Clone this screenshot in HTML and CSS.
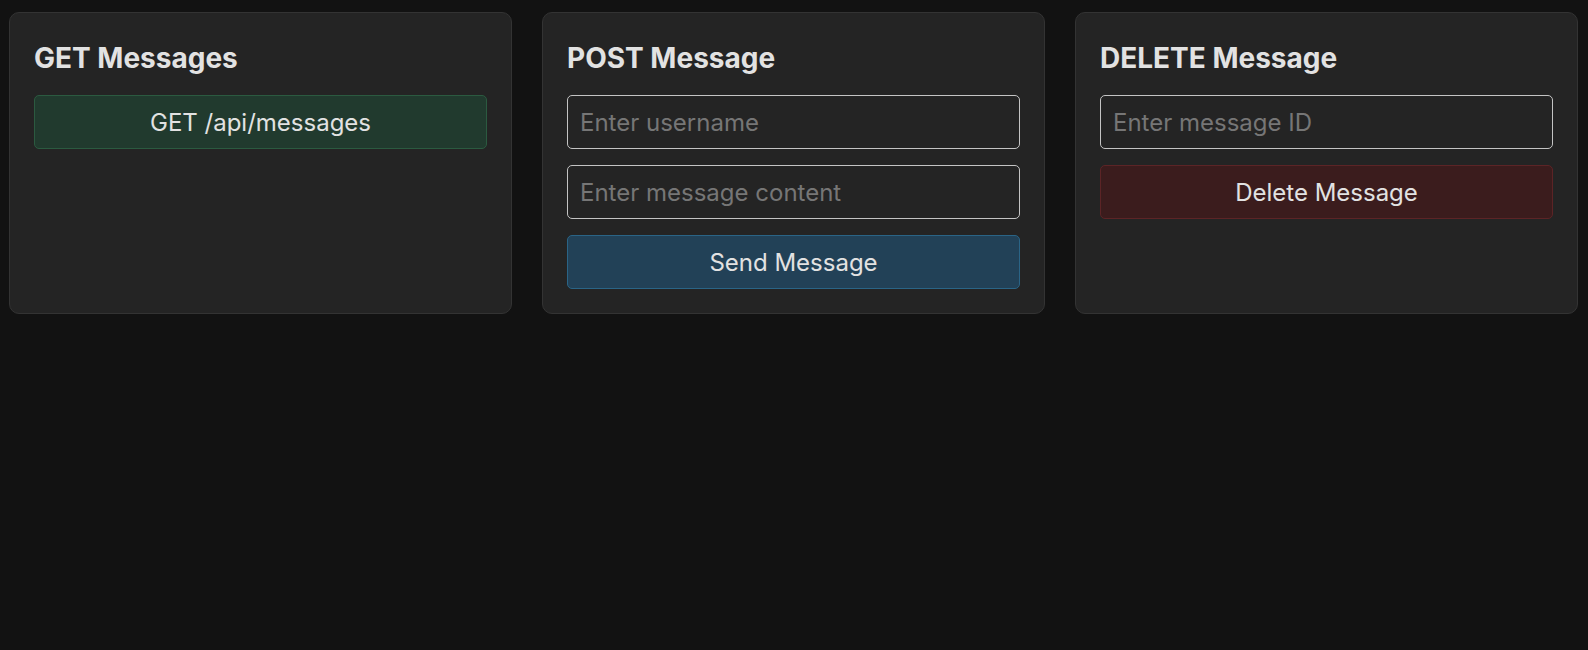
FILE: index.html
```html
<!DOCTYPE html>
<html lang="en">
<head>
<meta charset="utf-8">
<title>API Tester</title>
<link rel="stylesheet" href="styles.css">
</head>
<body>
<main class="grid">
  <section class="card">
    <h2 class="card-title">GET Messages</h2>
    <div class="stack">
      <button class="btn btn-get" type="button">GET /api/messages</button>
    </div>
  </section>
  <section class="card">
    <h2 class="card-title">POST Message</h2>
    <div class="stack">
      <input class="field" type="text" placeholder="Enter username">
      <input class="field" type="text" placeholder="Enter message content">
      <button class="btn btn-post" type="button">Send Message</button>
    </div>
  </section>
  <section class="card">
    <h2 class="card-title">DELETE Message</h2>
    <div class="stack">
      <input class="field" type="text" placeholder="Enter message ID">
      <button class="btn btn-delete" type="button">Delete Message</button>
    </div>
  </section>
</main>
</body>
</html>
```

FILE: styles.css
```css
* { box-sizing: border-box; }

html, body {
  margin: 0;
  background: #121212;
  color: #e0e0e0;
  font-family: "Inter", "Noto Sans", sans-serif;
}

.grid {
  display: grid;
  grid-template-columns: repeat(3, 1fr);
  gap: 30px;
  padding: 12px 10px 12px 9px;
  align-items: stretch;
}

.card {
  background: #242424;
  border: 1px solid #333333;
  border-radius: 10px;
  padding: 24px;
}

.card-title {
  margin: 1px 0 17px;
  font-size: 28px;
  line-height: 40px;
  font-weight: 700;
  color: #e2e2e2;
}

.stack {
  display: flex;
  flex-direction: column;
  gap: 16px;
}

.field {
  height: 54px;
  width: 100%;
  padding: 0 12px;
  font-family: inherit;
  font-size: 24px;
  color: #e0e0e0;
  background: #242424;
  border: 1px solid #c4c4c4;
  border-radius: 5px;
  outline: none;
}

.field::placeholder { color: #767676; }

.btn {
  height: 54px;
  width: 100%;
  font-family: inherit;
  font-size: 24px;
  color: #e2e2e2;
  border-radius: 5px;
  border: 1px solid;
  cursor: pointer;
}

.btn-get { background: #213a2e; border-color: #2b5a40; }
.btn-post { background: #224157; border-color: #2a6486; }
.btn-delete { background: #3b1c1d; border-color: #5c2426; }
```
